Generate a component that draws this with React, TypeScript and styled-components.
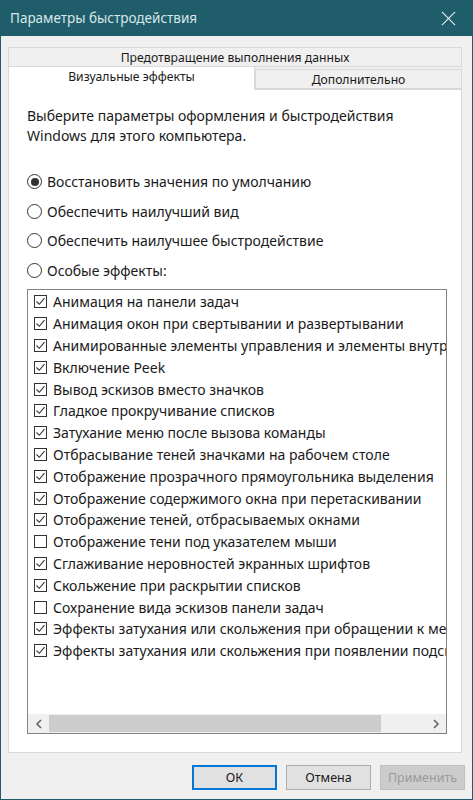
import React from 'react';
import styled, { createGlobalStyle } from 'styled-components';

const GlobalStyle = createGlobalStyle`
  html, body {
    margin: 0;
    padding: 0;
    background: #f0f0f0;
  }
  * {
    box-sizing: border-box;
  }
`;

const effects = [
  { label: 'Анимация на панели задач', on: true },
  { label: 'Анимация окон при свертывании и развертывании', on: true },
  { label: 'Анимированные элементы управления и элементы внутри окна', on: true },
  { label: 'Включение Peek', on: true },
  { label: 'Вывод эскизов вместо значков', on: true },
  { label: 'Гладкое прокручивание списков', on: true },
  { label: 'Затухание меню после вызова команды', on: true },
  { label: 'Отбрасывание теней значками на рабочем столе', on: true },
  { label: 'Отображение прозрачного прямоугольника выделения', on: true },
  { label: 'Отображение содержимого окна при перетаскивании', on: true },
  { label: 'Отображение теней, отбрасываемых окнами', on: true },
  { label: 'Отображение тени под указателем мыши', on: false },
  { label: 'Сглаживание неровностей экранных шрифтов', on: true },
  { label: 'Скольжение при раскрытии списков', on: true },
  { label: 'Сохранение вида эскизов панели задач', on: false },
  { label: 'Эффекты затухания или скольжения при обращении к меню', on: true },
  { label: 'Эффекты затухания или скольжения при появлении подсказок', on: true },
];

const modes = [
  { label: 'Восстановить значения по умолчанию', on: true },
  { label: 'Обеспечить наилучший вид', on: false },
  { label: 'Обеспечить наилучшее быстродействие', on: false },
  { label: 'Особые эффекты:', on: false },
];

const App = () => {
  return (
    <Window>
      <GlobalStyle />
      <TitleBar>
        <span>Параметры быстродействия</span>
        <svg width="15" height="15" viewBox="0 0 16 16">
          <path d="M1 1 L15 15 M15 1 L1 15" stroke="#e4eef0" strokeWidth="1.2" fill="none" />
        </svg>
      </TitleBar>
      <Body>
        <TabRow>
          <Tab>Предотвращение выполнения данных</Tab>
        </TabRow>
        <TabRow>
          <Tab $active>Визуальные эффекты</Tab>
          <Tab>Дополнительно</Tab>
        </TabRow>
        <Panel>
          <Description>
            Выберите параметры оформления и быстродействия Windows для этого компьютера.
          </Description>
          <RadioGroup>
            {modes.map((m) => (
              <RadioRow key={m.label}>
                <Radio $on={m.on} />
                {m.label}
              </RadioRow>
            ))}
          </RadioGroup>
          <ListBox>
            <ListItems>
              {effects.map((e) => (
                <CheckRow key={e.label}>
                  <CheckBox>
                    {e.on && (
                      <svg width="11" height="11" viewBox="0 0 11 11">
                        <path d="M1.5 5.5 L4.3 8.3 L9.5 2.2" stroke="#333" strokeWidth="1.1" fill="none" />
                      </svg>
                    )}
                  </CheckBox>
                  {e.label}
                </CheckRow>
              ))}
            </ListItems>
            <ScrollBar>
              <ScrollArrow>
                <svg width="8" height="10" viewBox="0 0 8 10">
                  <path d="M6 1 L2 5 L6 9" stroke="#606060" strokeWidth="1.5" fill="none" />
                </svg>
              </ScrollArrow>
              <Track>
                <Thumb />
              </Track>
              <ScrollArrow>
                <svg width="8" height="10" viewBox="0 0 8 10">
                  <path d="M2 1 L6 5 L2 9" stroke="#606060" strokeWidth="1.5" fill="none" />
                </svg>
              </ScrollArrow>
            </ScrollBar>
          </ListBox>
        </Panel>
        <Footer>
          <Button $primary>ОК</Button>
          <Button>Отмена</Button>
          <Button $disabled>Применить</Button>
        </Footer>
      </Body>
    </Window>
  );
};

const Window = styled.div`
  width: 473px;
  height: 800px;
  display: flex;
  flex-direction: column;
  background: #f0f0f0;
  border: 1px solid #1e5d69;
  border-top: none;
  font-family: 'Noto Sans', 'Open Sans', sans-serif;
  color: #1a1a1a;
`;

const TitleBar = styled.div`
  height: 36px;
  flex: none;
  background: #1e5d69;
  color: #d9e7ea;
  font-size: 13.5px;
  display: flex;
  align-items: center;
  justify-content: space-between;
  padding: 0 16px 0 9px;
`;

const Body = styled.div`
  flex: 1;
  display: flex;
  flex-direction: column;
  padding: 11px 10px 0 7px;
`;

const TabRow = styled.div`
  display: flex;
  height: 20px;
  &:nth-child(2) {
    height: 23px;
    margin-top: -1px;
    align-items: flex-end;
  }
`;

const Tab = styled.div<{ $active?: boolean }>`
  flex: ${(p) => (p.$active ? '0 0 247px' : '1')};
  height: ${(p) => (p.$active ? '24px' : '20px')};
  display: flex;
  align-items: center;
  justify-content: center;
  font-size: 12.2px;
  background: ${(p) => (p.$active ? '#ffffff' : '#f0f0f0')};
  border: 1px solid #d9d9d9;
  border-bottom: ${(p) => (p.$active ? 'none' : '1px solid #d9d9d9')};
  margin-bottom: ${(p) => (p.$active ? '-1px' : '0')};
  position: relative;
  z-index: ${(p) => (p.$active ? 1 : 0)};
  padding-top: ${(p) => (p.$active ? '0' : '1px')};
  padding-bottom: ${(p) => (p.$active ? '4px' : '0')};
`;

const Panel = styled.div`
  flex: none;
  height: 664px;
  background: #ffffff;
  border: 1px solid #d9d9d9;
  display: flex;
  flex-direction: column;
  padding: 16px 14px 18px 18px;
`;

const Description = styled.div`
  font-size: 14px;
  line-height: 20px;
  padding-right: 40px;
`;

const RadioGroup = styled.div`
  margin-top: 21px;
  display: flex;
  flex-direction: column;
`;

const RadioRow = styled.div`
  height: 29.5px;
  display: flex;
  align-items: center;
  gap: 5px;
  font-size: 14px;
`;

const Radio = styled.span<{ $on?: boolean }>`
  width: 15px;
  height: 15px;
  border-radius: 50%;
  border: 1px solid #333333;
  display: flex;
  align-items: center;
  justify-content: center;
  &::after {
    content: '';
    display: ${(p) => (p.$on ? 'block' : 'none')};
    width: 8px;
    height: 8px;
    border-radius: 50%;
    background: #333333;
  }
`;

const ListBox = styled.div`
  margin-top: 4px;
  height: 445px;
  border: 1px solid #828282;
  display: flex;
  flex-direction: column;
  overflow: hidden;
`;

const ListItems = styled.div`
  flex: 1;
  padding: 1px 0 0 6px;
  overflow: hidden;
`;

const CheckRow = styled.div`
  height: 21.8px;
  display: flex;
  align-items: center;
  gap: 6px;
  font-size: 14px;
  white-space: nowrap;
`;

const CheckBox = styled.span`
  flex: none;
  width: 13px;
  height: 13px;
  border: 1px solid #333333;
  display: flex;
  align-items: center;
  justify-content: center;
`;

const ScrollBar = styled.div`
  height: 19px;
  flex: none;
  display: flex;
  background: #f0f0f0;
`;

const ScrollArrow = styled.div`
  width: 21px;
  display: flex;
  align-items: center;
  justify-content: center;
`;

const Track = styled.div`
  flex: 1;
  display: flex;
  padding: 1px 0;
`;

const Thumb = styled.div`
  width: 332px;
  background: #cdcdcd;
`;

const Footer = styled.div`
  display: flex;
  justify-content: flex-end;
  gap: 9px;
  padding-top: 12px;
  margin-right: -3px;
`;

const Button = styled.div<{ $primary?: boolean; $disabled?: boolean }>`
  width: 85px;
  height: 25px;
  display: flex;
  align-items: center;
  justify-content: center;
  font-size: 12.5px;
  background: ${(p) => (p.$disabled ? '#cccccc' : '#e1e1e1')};
  color: ${(p) => (p.$disabled ? '#9a9a9a' : '#1a1a1a')};
  border: ${(p) =>
    p.$primary ? '2px solid #0078d7' : p.$disabled ? '1px solid #bfbfbf' : '1px solid #adadad'};
`;

export default App;
